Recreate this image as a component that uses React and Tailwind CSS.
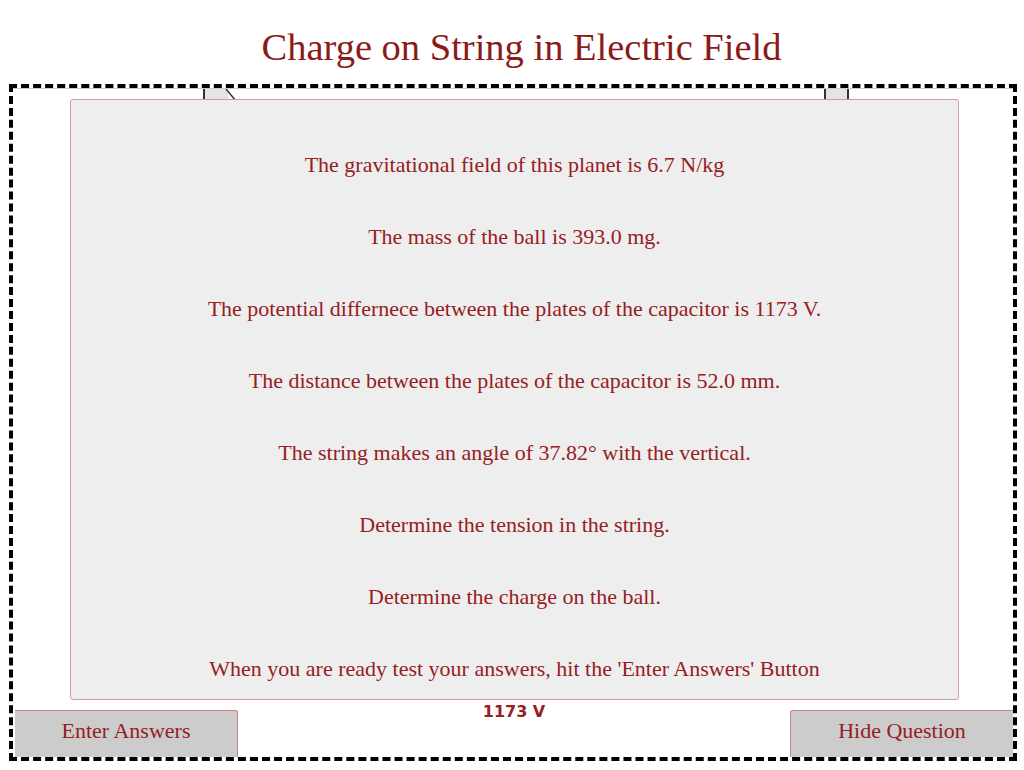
export default function App() {
  const lines = [
    "The gravitational field of this planet is 6.7 N/kg",
    "The mass of the ball is 393.0 mg.",
    "The potential differnece between the plates of the capacitor is 1173 V.",
    "The distance between the plates of the capacitor is 52.0 mm.",
    "The string makes an angle of 37.82° with the vertical.",
    "Determine the tension in the string.",
    "Determine the charge on the ball.",
    "When you are ready test your answers, hit the 'Enter Answers' Button",
  ];

  return (
    <div className="w-[1024px] h-[770px] bg-white overflow-hidden" style={{ fontFamily: "'Liberation Serif', serif" }}>
      {/* Title */}
      <div className="h-[84px] pt-[27px] pl-[19px] text-center text-[38.5px] leading-[40px] text-[#8b1a1a]">
        Charge on String in Electric Field
      </div>

      {/* Dashed frame */}
      <div className="ml-[9px] w-[1008px] h-[677px] border-4 border-dashed border-black">
        <div className="relative w-full h-full border-t border-[#cccccc] flex flex-col">
          {/* Capacitor plates (canvas drawing behind the overlay) */}
          <div className="absolute left-[190px] top-0 w-[25px] h-[12px] bg-[#e4e4e4] border-l-2 border-[#333]" />
          <svg className="absolute left-[212px] top-0" width="14" height="12">
            <line x1="1" y1="0" x2="11" y2="12" stroke="#333" strokeWidth="1.5" />
          </svg>
          <div className="absolute left-[811px] top-0 w-[25px] h-[12px] bg-[#e4e4e4] border-x-2 border-[#333]" />

          {/* Question panel */}
          <div className="absolute left-[57px] top-[10px] w-[889px] h-[601px] bg-[#eeeeee] border border-[#d99a9a] rounded-[3px] flex flex-col items-center pt-[53px] gap-[48px] text-[22px] leading-[24px] text-[#96201f]">
            {lines.map((l) => (
              <div key={l}>{l}</div>
            ))}
          </div>

          {/* Bottom controls */}
          <div className="mt-auto flex items-end justify-between pl-[2px]">
            <button className="w-[223px] h-[47px] pb-[7px] bg-[#cccccc] border-t border-r border-[#d08080] rounded-tr-[3px] text-[22px] text-[#96201f]">
              Enter Answers
            </button>
            <div
              className="self-start text-[16px] font-bold leading-[20px] text-[#96201f] -mt-[8px]"
              style={{ fontFamily: "'DejaVu Sans', sans-serif" }}
            >
              1173 V
            </div>
            <button className="w-[223px] h-[47px] pb-[7px] bg-[#cccccc] border-t border-l border-[#d08080] rounded-tl-[3px] text-[22px] text-[#96201f]">
              Hide Question
            </button>
          </div>
        </div>
      </div>
    </div>
  );
}
